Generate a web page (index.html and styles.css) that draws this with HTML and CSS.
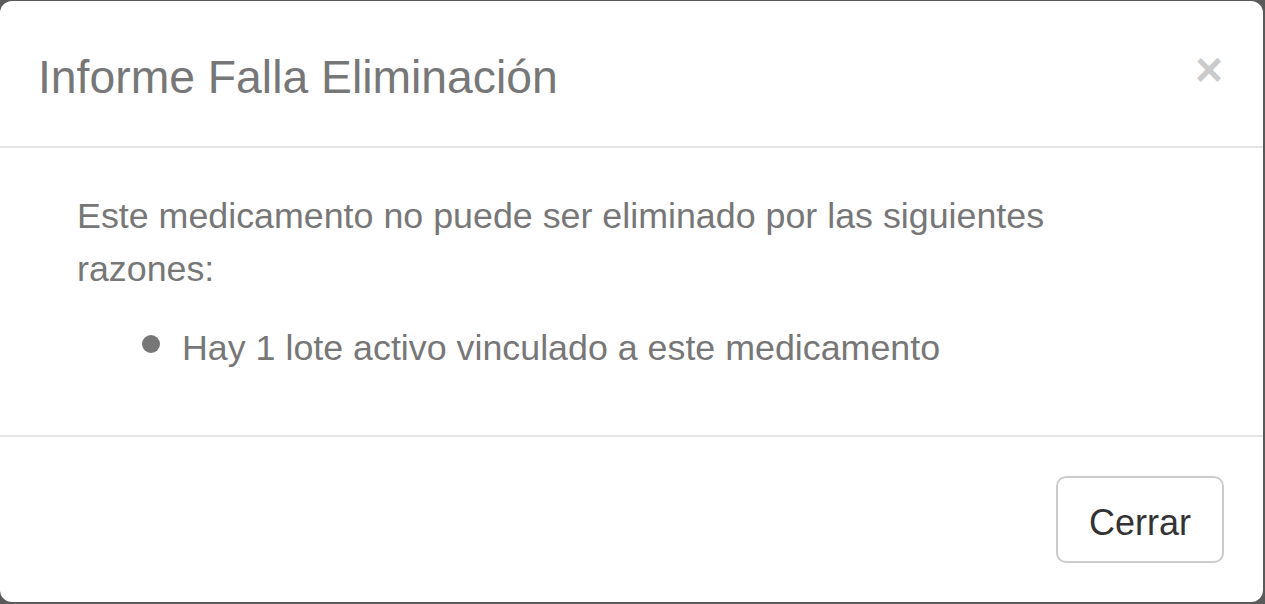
FILE: index.html
```html
<!DOCTYPE html>
<html lang="es">
<head>
<meta charset="utf-8">
<title>Informe Falla Eliminación</title>
<link rel="stylesheet" href="styles.css">
</head>
<body>
<div class="modal">
  <div class="modal-header">
    <h4 class="modal-title">Informe Falla Eliminación</h4>
    <button class="close" type="button" aria-label="Close">×</button>
  </div>
  <div class="modal-body">
    <div class="content">
      <p class="intro">Este medicamento no puede ser eliminado por las siguientes razones:</p>
      <ul class="reasons">
        <li class="reason">Hay 1 lote activo vinculado a este medicamento</li>
      </ul>
    </div>
  </div>
  <div class="modal-footer">
    <button class="btn" type="button">Cerrar</button>
  </div>
</div>
</body>
</html>
```

FILE: styles.css
```css
html, body {
  margin: 0;
  padding: 0;
}
body {
  background: #5a5a5a;
  font-family: "Liberation Sans", Arial, Helvetica, sans-serif;
  width: 1265px;
  height: 604px;
  overflow: hidden;
}
.modal {
  box-sizing: border-box;
  margin: 1px 2px 0 0;
  height: 601px;
  background: #fff;
  border-radius: 12px;
  display: flex;
  flex-direction: column;
}
.modal-header {
  box-sizing: border-box;
  height: 147px;
  padding: 6px 38px 0 38px;
  border-bottom: 2px solid #e5e5e5;
  display: flex;
  align-items: center;
  justify-content: space-between;
}
.modal-title {
  margin: 0;
  font-size: 46.3px;
  font-weight: normal;
  line-height: 66px;
  color: #777;
}
.close {
  border: 0;
  background: transparent;
  padding: 0;
  margin: 0 2px 13px 0;
  font-family: "Liberation Sans", Arial, sans-serif;
  font-size: 48px;
  font-weight: bold;
  line-height: 1;
  color: #000;
  opacity: 0.2;
  cursor: pointer;
}
.modal-body {
  box-sizing: border-box;
  height: 289px;
  padding: 42px 38px 0 38px;
  border-bottom: 2px solid #e5e5e5;
}
.content {
  padding: 0 37px 0 39px;
}
.intro {
  margin: 0 0 26px 0;
  font-size: 35.8px;
  line-height: 53px;
  color: #777;
}
.reasons {
  list-style: none;
  margin: 0 0 0 65px;
  padding: 0;
  font-size: 35.8px;
  line-height: 53px;
  color: #777;
}
.reason {
  display: flex;
}
.reason::before {
  content: "";
  flex: none;
  width: 18px;
  height: 18px;
  margin: 13px 22px 0 0;
  border-radius: 50%;
  background: #777;
}
.modal-footer {
  flex: 1;
  box-sizing: border-box;
  padding: 39px 39px 0 38px;
  display: flex;
  justify-content: flex-end;
  align-items: flex-start;
}
.btn {
  box-sizing: border-box;
  width: 168px;
  height: 87px;
  border: 2px solid #ccc;
  border-radius: 10px;
  background: #fff;
  color: #333;
  font-family: "Liberation Sans", Arial, sans-serif;
  font-size: 36px;
  padding: 6px 0 0 0;
  cursor: pointer;
}
```
